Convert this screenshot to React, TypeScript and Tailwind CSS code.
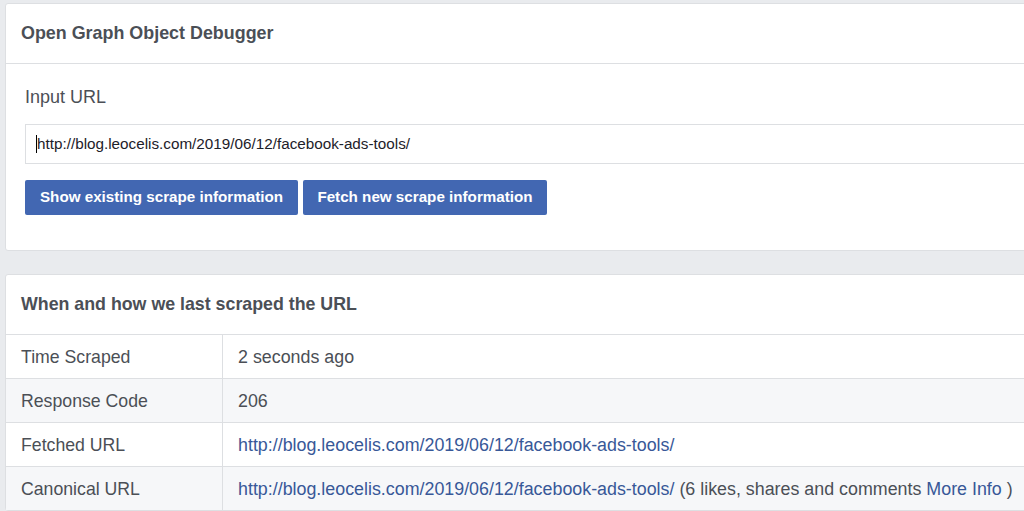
import React from 'react';

const url = 'http://blog.leocelis.com/2019/06/12/facebook-ads-tools/';

interface RowProps {
  label: string;
  shaded?: boolean;
  children: React.ReactNode;
}

const Row: React.FC<RowProps> = ({ label, shaded = false, children }) => (
  <div className={`flex h-[44px] border-t border-[#dddfe2] ${shaded ? 'bg-[#f6f7f9]' : 'bg-white'}`}>
    <div className="w-[217px] shrink-0 border-r border-[#dddfe2] pl-[15px] pt-px flex items-center">{label}</div>
    <div className="pl-[15px] pt-px flex items-center whitespace-nowrap text-[17.85px]">{children}</div>
  </div>
);

const Link: React.FC<{ children: React.ReactNode }> = ({ children }) => (
  <a href="#" className="text-[#385898]">{children}</a>
);

export default function App() {
  return (
    <div
      className="w-[1024px] h-[511px] overflow-hidden bg-[#e9ebee] pt-[3px] pl-[5px] text-[#4b4f56]"
      style={{ fontFamily: '"Liberation Sans", Arial, sans-serif' }}
    >
      <div className="w-[1060px] bg-white border border-[#dddfe2] rounded-[3px]">
        <div className="h-[60px] flex items-center pl-[15px] border-b border-[#dddfe2]">
          <h1 className="text-[17.9px] font-bold text-[#4b4f56]">Open Graph Object Debugger</h1>
        </div>
        <div className="pl-[19px] pt-[21px] pb-[35px]">
          <div className="text-[18px] leading-[24px]">Input URL</div>
          <div className="mt-[15px] h-[40px] border border-[#dddfe2] flex items-center pl-[10px] text-[15.25px] text-[#1d2129]">
            <span className="w-px h-[18px] bg-black" />
            <span>{url}</span>
          </div>
          <div className="mt-[16px] flex gap-[5px]">
            <button className="h-[35px] w-[273px] rounded-[2px] bg-[#4267b2] text-white text-[15.2px] font-bold">
              Show existing scrape information
            </button>
            <button className="h-[35px] w-[244px] rounded-[2px] bg-[#4267b2] text-white text-[15.2px] font-bold">
              Fetch new scrape information
            </button>
          </div>
        </div>
      </div>

      <div className="mt-[23px] w-[1060px] bg-white border border-[#dddfe2] rounded-[3px] text-[17.7px]">
        <div className="h-[59px] flex items-center pl-[15px]">
          <h2 className="text-[17.8px] font-bold text-[#4b4f56]">When and how we last scraped the URL</h2>
        </div>
        <Row label="Time Scraped">2 seconds ago</Row>
        <Row label="Response Code" shaded>206</Row>
        <Row label="Fetched URL">
          <Link>{url}</Link>
        </Row>
        <Row label="Canonical URL" shaded>
          <Link>{url}</Link>
          <span className="whitespace-pre"> (6 likes, shares and comments </span>
          <Link>More Info</Link>
          <span className="whitespace-pre"> )</span>
        </Row>
      </div>
    </div>
  );
}
